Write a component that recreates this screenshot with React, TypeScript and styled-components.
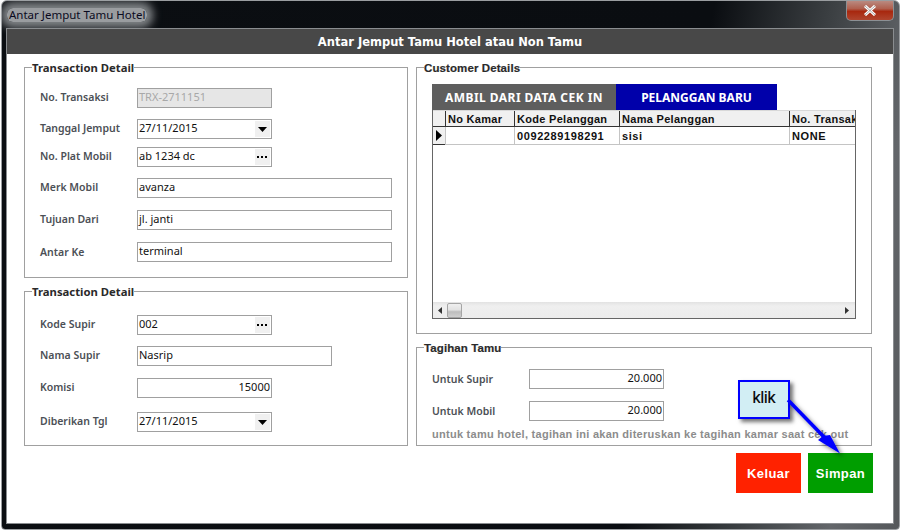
import React from "react";
import styled, { createGlobalStyle } from "styled-components";

const Global = createGlobalStyle`
  html, body { margin: 0; padding: 0; background: #fff; }
  #root { width: 901px; height: 531px; overflow: hidden; }
  * { box-sizing: border-box; }
`;

const tahoma = `"Noto Sans", "Open Sans", sans-serif`;
const arial = `"Liberation Sans", Arial, sans-serif`;

const Frame = styled.div`
  position: relative;
  width: 899px;
  height: 530px;
  margin-left: 1px;
  border: 1px solid #9a9da0;
  border-radius: 6px 6px 4px 4px;
  background: linear-gradient(100deg, #0b0e12 0%, #0a0d11 72%, #3c4043 84%, #63666a 93%, #55585b 100%);
  display: flex;
  flex-direction: column;
  padding: 0 5px 5px 4px;
`;

const TitleBar = styled.div`
  height: 27px;
  flex: none;
  display: flex;
  align-items: center;
  justify-content: space-between;
`;

const Title = styled.span`
  font: 11.5px ${tahoma};
  color: #0a0a20;
  margin-left: 1px;
  padding: 0 2px;
  background: rgba(170, 173, 176, 0.9);
  box-shadow: 0 0 8px 6px rgba(170, 173, 176, 0.75);
  border-radius: 6px;
  line-height: 14px;
`;

const CloseBtn = styled.div`
  width: 48px;
  height: 20px;
  margin-top: -7px;
  border: 1px solid #8c9094;
  border-top: none;
  border-radius: 0 0 5px 5px;
  background: linear-gradient(180deg, #b98a80 0%, #b0604f 40%, #a8280f 55%, #b0452e 100%);
  display: flex;
  align-items: center;
  justify-content: center;
`;

const Client = styled.div`
  flex: 1;
  background: #fff;
  display: flex;
  flex-direction: column;
  border: 1px solid #8a8d90;
`;

const HeaderBar = styled.div`
  height: 25px;
  flex: none;
  background: #484848;
  color: #fff;
  font: bold 11.5px "DejaVu Sans", sans-serif;
  display: flex;
  align-items: center;
  justify-content: center;
  padding-top: 1px;
`;

const Body = styled.div`
  flex: none;
  display: grid;
  grid-template-columns: 384px 456px;
  column-gap: 8px;
  padding: 6px 0 0 17px;
  align-content: start;
`;

const Column = styled.div`
  display: flex;
  flex-direction: column;
  gap: 6px;
`;

const Group = styled.fieldset<{ $h: number }>`
  margin: 0;
  padding: 0;
  min-width: 0;
  border: 1px solid #a0a0a0;
  height: ${(p) => p.$h}px;
`;

const Legend = styled.legend<{ $plain?: boolean }>`
  margin-left: 7px;
  padding: ${(p) => (p.$plain ? "2px" : "0")} 0 0;
  height: 14px;
  font: ${(p) => (p.$plain ? `600 11.5px ${arial}` : `bold 11.3px ${tahoma}`)};
  color: #2a2a2a;
  letter-spacing: ${(p) => (p.$plain ? "0.1px" : "0")};
  -webkit-text-stroke: ${(p) => (p.$plain ? "0.2px #333" : "0")};
`;

const Rows = styled.div<{ $top: number; $left: number; $label: number }>`
  display: flex;
  flex-direction: column;
  padding-top: ${(p) => p.$top}px;
  padding-left: ${(p) => p.$left}px;
  --label: ${(p) => p.$label}px;
`;

const Row = styled.div<{ $mt?: number }>`
  display: flex;
  align-items: center;
  margin-top: ${(p) => p.$mt ?? 0}px;
`;

const Label = styled.label<{ $low?: boolean }>`
  width: var(--label);
  flex: none;
  font: 600 10.5px ${tahoma};
  color: #4c5056;
  margin-top: ${(p) => (p.$low ? "0" : "-3px")};
`;

const Field = styled.div<{ $w: number; $h?: number; $disabled?: boolean; $right?: boolean }>`
  width: ${(p) => p.$w}px;
  height: ${(p) => p.$h ?? 20}px;
  border: 1px solid #a0a0a0;
  background: ${(p) => (p.$disabled ? "#e6e6e6" : "#fff")};
  color: ${(p) => (p.$disabled ? "#a8a8a8" : "#111")};
  font: 11px ${tahoma};
  display: flex;
  align-items: center;
  justify-content: ${(p) => (p.$right ? "flex-end" : "space-between")};
  padding: 0 1px 3px 1px;
  white-space: nowrap;
`;

const FieldBtn = styled.span`
  width: 15px;
  height: 16px;
  align-self: flex-start;
  margin-top: 1px;
  background: #f0f0f0;
  display: flex;
  align-items: center;
  justify-content: center;
`;

const Stack = styled.div`
  padding: 10px 15px 0 15px;
`;

const Tabs = styled.div`
  display: flex;
  height: 26px;
`;

const Tab = styled.div<{ $w: number; $active?: boolean }>`
  width: ${(p) => p.$w}px;
  background: ${(p) => (p.$active ? "#0000aa" : "#5e5e5e")};
  color: #fff;
  font: bold 12px ${tahoma};
  letter-spacing: ${(p) => (p.$active ? "0" : "0.45px")};
  display: flex;
  align-items: center;
  justify-content: center;
`;

const GridBox = styled.div`
  height: 209px;
  border: 1px solid #666;
  border-top: none;
  background: #fff;
  display: flex;
  flex-direction: column;
`;

const GridArea = styled.div`
  flex: 1;
  overflow: hidden;
`;

const GridRow = styled.div<{ $head?: boolean }>`
  display: grid;
  grid-template-columns: 12px 69px 105px 170px 67px;
  height: ${(p) => (p.$head ? 17 : 18)}px;
  background: ${(p) => (p.$head ? "#f0f0f0" : "#fff")};
  border-top: ${(p) => (p.$head ? "1px solid #d8d8d8" : "none")};
`;

const Cell = styled.div<{ $head?: boolean }>`
  font: bold 11px ${arial};
  letter-spacing: ${(p) => (p.$head ? "0.3px" : "0.6px")};
  color: #111;
  padding-left: 2px;
  display: flex;
  align-items: center;
  white-space: nowrap;
  overflow: hidden;
  border-left: ${(p) => (p.$head ? "1px solid #333" : "1px solid #c4c4c4")};
  border-bottom: ${(p) => (p.$head ? "1px solid #333" : "1px solid #c4c4c4")};
`;

const Selector = styled.div`
  background: #f0f0f0;
  border-bottom: 1px solid #333;
  display: flex;
  align-items: center;
  justify-content: center;
`;

const HScroll = styled.div`
  height: 16px;
  flex: none;
  background: linear-gradient(180deg, #e2e2e2 0%, #efefef 25%, #ececec 100%);
  display: flex;
  align-items: center;
  justify-content: space-between;
  padding: 0 6px 0 5px;
`;

const Thumb = styled.div`
  width: 15px;
  height: 15px;
  margin-left: 5px;
  margin-right: auto;
  border: 1px solid #a5a5a5;
  border-radius: 2px;
  background: linear-gradient(180deg, #efefef 0%, #e2e2e2 45%, #bdbdbd 60%, #cfcfcf 100%);
`;

const Note = styled.div`
  margin-top: 7px;
  font: bold 11px ${arial};
  letter-spacing: 0.27px;
  color: #8c8c8c;
  white-space: nowrap;
`;

const Actions = styled.div`
  display: flex;
  justify-content: flex-end;
  gap: 7px;
  padding: 7px 20px 0 0;
`;

const ActionBtn = styled.button<{ $bg: string }>`
  width: 65px;
  height: 40px;
  border: none;
  padding: 0;
  background: ${(p) => p.$bg};
  color: #fff;
  font: bold 13px ${arial};
  letter-spacing: 0.4px;
`;

const Callout = styled.div`
  position: absolute;
  left: 736px;
  top: 379px;
  width: 52px;
  height: 39px;
  border: 2px solid #0000ff;
  background: #d2eef4;
  box-shadow: 3px 3px 4px rgba(0, 0, 0, 0.55);
  color: #000;
  font: 16px ${arial};
  -webkit-text-stroke: 0.2px #000;
  display: flex;
  align-items: center;
  justify-content: center;
  padding-bottom: 4px;
`;

const Arrow = styled.svg`
  position: absolute;
  left: 779px;
  top: 389px;
  overflow: visible;
`;

const Caret = () => (
  <svg width="9" height="5" viewBox="0 0 9 5"><path d="M0 0h9L4.5 5z" fill="#000" /></svg>
);
const Dots = () => (
  <svg width="11" height="3" viewBox="0 0 11 3">
    <rect x="0" y="0" width="2" height="2" fill="#000" />
    <rect x="4" y="0" width="2" height="2" fill="#000" />
    <rect x="8" y="0" width="2" height="2" fill="#000" />
  </svg>
);
const Pointer = () => (
  <svg width="6" height="11" viewBox="0 0 6 11"><path d="M0 0l6 5.5L0 11z" fill="#000" /></svg>
);
const ScrollL = () => (
  <svg width="4" height="7" viewBox="0 0 4 7"><path d="M4 0v7L0 3.5z" fill="#333" /></svg>
);
const ScrollR = () => (
  <svg width="4" height="7" viewBox="0 0 4 7"><path d="M0 0v7l4-3.5z" fill="#333" /></svg>
);

const App = () => (
  <>
    <Global />
    <Frame>
      <TitleBar>
        <Title>Antar Jemput Tamu Hotel</Title>
        <CloseBtn>
          <svg width="14" height="11" viewBox="0 0 14 11">
            <path d="M2 1l10 9M12 1L2 10" stroke="#fff" strokeWidth="3" fill="none" />
            <path d="M2 1l10 9M12 1L2 10" stroke="#555" strokeWidth="0.5" fill="none" />
          </svg>
        </CloseBtn>
      </TitleBar>
      <Client>
        <HeaderBar>Antar Jemput Tamu Hotel atau Non Tamu</HeaderBar>
        <Body>
          <Column>
            <Group $h={218}>
              <Legend>Transaction Detail</Legend>
              <Rows $top={14} $left={15} $label={97}>
                <Row><Label>No. Transaksi</Label><Field $w={135} $disabled>TRX-2711151</Field></Row>
                <Row $mt={11}><Label>Tanggal Jemput</Label><Field $w={135}>27/11/2015<FieldBtn><Caret /></FieldBtn></Field></Row>
                <Row $mt={8}><Label>No. Plat Mobil</Label><Field $w={135}>ab 1234 dc<FieldBtn><Dots /></FieldBtn></Field></Row>
                <Row $mt={11}><Label>Merk Mobil</Label><Field $w={255}>avanza</Field></Row>
                <Row $mt={12}><Label>Tujuan Dari</Label><Field $w={255}>jl. janti</Field></Row>
                <Row $mt={12}><Label $low>Antar Ke</Label><Field $w={255}>terminal</Field></Row>
              </Rows>
            </Group>
            <Group $h={162}>
              <Legend>Transaction Detail</Legend>
              <Rows $top={17} $left={15} $label={97}>
                <Row><Label>Kode Supir</Label><Field $w={135}>002<FieldBtn><Dots /></FieldBtn></Field></Row>
                <Row $mt={11}><Label>Nama Supir</Label><Field $w={195}>Nasrip</Field></Row>
                <Row $mt={12}><Label>Komisi</Label><Field $w={135} $right>15000</Field></Row>
                <Row $mt={14}><Label>Diberikan Tgl</Label><Field $w={135}>27/11/2015<FieldBtn><Caret /></FieldBtn></Field></Row>
              </Rows>
            </Group>
          </Column>
          <Column>
            <Group $h={274}>
              <Legend $plain>Customer Details</Legend>
              <Stack>
                <Tabs>
                  <Tab $w={184}>AMBIL DARI DATA CEK IN</Tab>
                  <Tab $w={161} $active>PELANGGAN BARU</Tab>
                </Tabs>
                <GridBox>
                  <GridArea>
                    <GridRow $head>
                      <Selector />
                      <Cell $head>No Kamar</Cell>
                      <Cell $head>Kode Pelanggan</Cell>
                      <Cell $head>Nama Pelanggan</Cell>
                      <Cell $head>No. Transaksi</Cell>
                    </GridRow>
                    <GridRow>
                      <Selector><Pointer /></Selector>
                      <Cell></Cell>
                      <Cell>0092289198291</Cell>
                      <Cell>sisi</Cell>
                      <Cell>NONE</Cell>
                    </GridRow>
                  </GridArea>
                  <HScroll>
                    <ScrollL />
                    <Thumb />
                    <ScrollR />
                  </HScroll>
                </GridBox>
              </Stack>
            </Group>
            <Group $h={106}>
              <Legend $plain>Tagihan Tamu</Legend>
              <Rows $top={15} $left={15} $label={97}>
                <Row><Label $low>Untuk Supir</Label><Field $w={135} $right>20.000</Field></Row>
                <Row $mt={12}><Label $low>Untuk Mobil</Label><Field $w={135} $right>20.000</Field></Row>
                <Note>untuk tamu hotel, tagihan ini akan diteruskan ke tagihan kamar saat cek out</Note>
              </Rows>
            </Group>
          </Column>
        </Body>
        <Actions>
          <ActionBtn $bg="#ff2200">Keluar</ActionBtn>
          <ActionBtn $bg="#009e00">Simpan</ActionBtn>
        </Actions>
      </Client>
      <Callout>klik</Callout>
      <Arrow width="70" height="70" viewBox="0 0 70 70">
        <defs>
          <filter id="s" x="-30%" y="-30%" width="160%" height="160%">
            <feDropShadow dx="3" dy="3" stdDeviation="2" floodColor="#000" floodOpacity="0.5" />
          </filter>
        </defs>
        <g filter="url(#s)">
          <path d="M7 10L44 48" stroke="#0000ff" strokeWidth="3.5" fill="none" />
          <path d="M59 63.5L37 50L42 46L49 45z" fill="#0000ff" />
        </g>
      </Arrow>
    </Frame>
  </>
);

export default App;
